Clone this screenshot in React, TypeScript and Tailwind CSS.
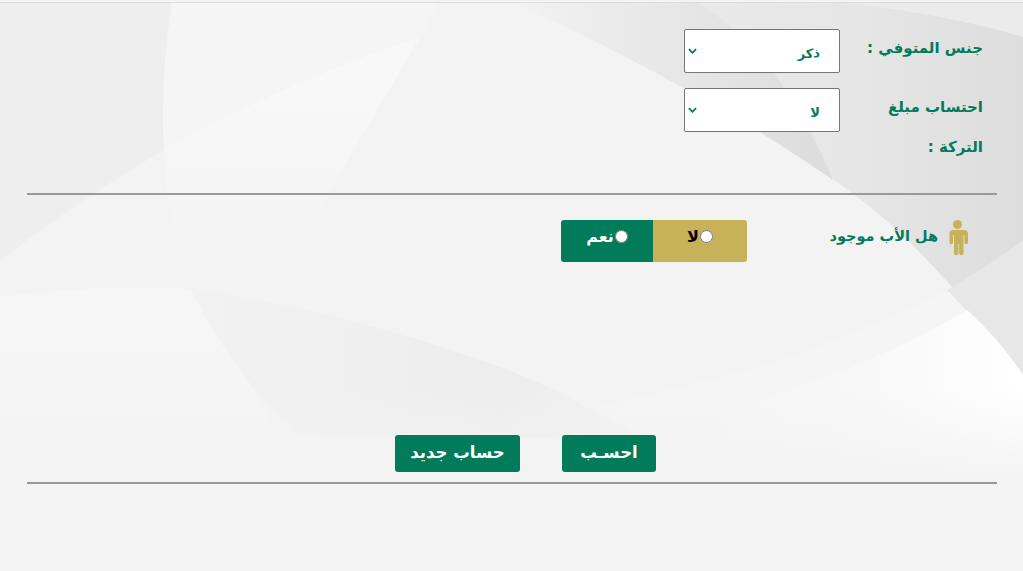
import React from 'react';

const font = { fontFamily: '"DejaVu Sans", sans-serif' };

const Background = () => (
  <svg className="absolute inset-0 h-full w-full" viewBox="0 0 1023 571" preserveAspectRatio="none" aria-hidden="true">
    <defs>
      <linearGradient id="rightMain" gradientUnits="userSpaceOnUse" x1="700" y1="0" x2="1023" y2="0">
        <stop offset="0" stopColor="#e9e9e9" />
        <stop offset="0.5" stopColor="#e6e6e6" />
        <stop offset="1" stopColor="#dddddd" />
      </linearGradient>
      <linearGradient id="rightBand" gradientUnits="userSpaceOnUse" x1="513" y1="0" x2="810" y2="0">
        <stop offset="0" stopColor="#f3f3f3" />
        <stop offset="0.35" stopColor="#eaeaea" />
        <stop offset="0.65" stopColor="#e5e5e5" />
        <stop offset="1" stopColor="#dddddd" />
      </linearGradient>
      <linearGradient id="wedge" gradientUnits="userSpaceOnUse" x1="0" y1="100" x2="0" y2="245">
        <stop offset="0" stopColor="#f8f8f8" />
        <stop offset="1" stopColor="#f3f3f3" />
      </linearGradient>
      <linearGradient id="midShape" gradientUnits="userSpaceOnUse" x1="190" y1="0" x2="640" y2="0">
        <stop offset="0" stopColor="#f2f2f2" />
        <stop offset="0.7" stopColor="#ededed" />
        <stop offset="1" stopColor="#f2f2f2" />
      </linearGradient>
      <linearGradient id="leftFade" gradientUnits="userSpaceOnUse" x1="0" y1="290" x2="0" y2="455">
        <stop offset="0" stopColor="#f6f6f6" />
        <stop offset="0.8" stopColor="#f5f5f5" />
        <stop offset="1" stopColor="#f3f3f3" />
      </linearGradient>
      <linearGradient id="whiteBand" gradientUnits="userSpaceOnUse" x1="640" y1="0" x2="1023" y2="0">
        <stop offset="0" stopColor="#f4f4f4" />
        <stop offset="0.6" stopColor="#f8f8f8" />
        <stop offset="1" stopColor="#ffffff" />
      </linearGradient>
      <linearGradient id="bottomFade" gradientUnits="userSpaceOnUse" x1="0" y1="390" x2="0" y2="485">
        <stop offset="0" stopColor="#f3f3f3" stopOpacity="0" />
        <stop offset="1" stopColor="#f3f3f3" />
      </linearGradient>
    </defs>
    <rect width="1023" height="571" fill="#f3f3f3" />
    {/* top left */}
    <path d="M0 2H172Q160 80 164 150Q70 205 0 261Z" fill="#eeeeee" />
    <path d="M172 2H440L420 37Q290 80 164 150Q160 80 172 2Z" fill="#f5f5f5" />
    <path d="M164 150Q290 80 420 37L316 215L300 245H177Q166 200 164 150Z" fill="url(#wedge)" />
    {/* bottom left */}
    <path d="M0 297Q110 282 200 290L280 440L250 455H0Z" fill="url(#leftFade)" />
    <path d="M190 288Q360 315 500 367Q570 392 640 440L295 434Q230 370 190 288Z" fill="url(#midShape)" />
    {/* top right */}
    <path d="M513 2Q620 50 740 120Q850 185 900 233Q960 290 1023 375V2Z" fill="url(#rightMain)" />
    <path d="M840 2Q950 15 1023 37V2Z" fill="#ebebeb" />
    <path d="M513 2H697L727 23Q760 55 777 77Q810 125 833 180Q790 150 740 120Q620 50 513 2Z" fill="url(#rightBand)" />
    <path d="M1023 240Q990 265 947 290Q985 330 1023 375Z" fill="#e7e7e7" />
    {/* bottom right */}
    <path d="M947 290Q880 325 780 360Q700 385 600 405L640 440L1023 420V375Q985 330 947 290Z" fill="#f5f5f5" />
    <path d="M967 310Q850 380 667 427L620 482H1023V375Q1000 340 967 310Z" fill="url(#whiteBand)" />
    <rect y="390" width="1023" height="95" fill="url(#bottomFade)" />
  </svg>
);

const Person = () => (
  <svg viewBox="0 0 21 35" className="h-[35px] w-[21px] fill-[#c7b159]">
    <circle cx="10.5" cy="4.5" r="4.5" />
    <path d="M4 10h13a4 4 0 0 1 4 4v8.5a1.7 1.7 0 0 1-3.6 0V15h-.9v18a2 2 0 0 1-4.4 0V24h-.7v9a2 2 0 0 1-4.4 0V15h-.9v7.5a1.7 1.7 0 0 1-3.6 0V14a4 4 0 0 1 4-4Z" />
  </svg>
);

const FieldSelect = ({ value }: { value: string }) => (
  <div className="relative h-[44px] w-[156px]">
    <select
      defaultValue={value}
      className="h-full w-full appearance-none rounded-[2px] border border-[#767676] bg-white pt-[6px] pr-[19px] text-[13px] font-bold text-[#027b5b]"
      style={font}
    >
      <option>{value}</option>
    </select>
    <svg viewBox="0 0 10 6" className="pointer-events-none absolute top-[19px] left-[4px] h-[6px] w-[9px] fill-none stroke-[#027b5b] stroke-2">
      <path d="M1 1l4 4 4-4" />
    </svg>
  </div>
);

const FormRow = ({ label, value }: { label: string; value: string }) => (
  <div className="flex items-start">
    <label className="-mt-[1px] w-[143px] text-[15px] leading-[40px] font-bold text-[#027b5b]" style={font}>
      {label}
    </label>
    <FieldSelect value={value} />
  </div>
);

const Toggle = ({ text, className }: { text: string; className: string }) => (
  <label className={`flex h-[42px] items-start justify-center gap-[1px] pt-[9px] text-[16px] leading-[16px] font-bold ${className}`} style={font}>
    <input type="radio" name="father" className="mt-[1px] h-[13px] w-[13px]" />
    {text}
  </label>
);

const ActionButton = ({ text, className }: { text: string; className: string }) => (
  <button className={`h-[37px] rounded-[3px] bg-[#027b5b] text-[16.5px] font-bold text-white ${className}`} style={font}>
    {text}
  </button>
);

export default function App() {
  return (
    <div dir="rtl" className="relative h-[571px] overflow-hidden bg-[#f3f3f3] pt-[2px]">
      <Background />
      <div className="relative border-t border-[#dddddd] pt-[26px] pr-[26px] pl-[27px]">
        <div className="flex flex-col gap-[15px] pr-[14px]">
          <FormRow label="جنس المتوفي :" value="ذكر" />
          <div className="h-[87px]">
            <FormRow label="احتساب مبلغ التركة :" value="لا" />
          </div>
        </div>

        <hr className="mt-[18px] border-t-2 border-[#999999]" />

        <div className="mt-[25px] flex items-start">
          <div className="flex w-[250px] items-start pr-[29px]">
            <Person />
            <span className="mr-[9px] pt-[6px] text-[14.5px] leading-[20px] font-bold whitespace-nowrap text-[#027b5b]" style={font}>
              هل الأب موجود
            </span>
          </div>
          <div className="flex w-[186px] overflow-hidden rounded-[3px]">
            <Toggle text="لا" className="w-[94px] bg-[#c7b159] text-black" />
            <Toggle text="نعم" className="w-[92px] bg-[#027b5b] text-white" />
          </div>
        </div>

        <div className="mt-[173px] flex gap-[42px] pr-[341px]">
          <ActionButton text="احسـب" className="w-[94px]" />
          <ActionButton text="حساب جديد" className="w-[125px]" />
        </div>

        <hr className="mt-[10px] border-t-2 border-[#999999]" />
      </div>
    </div>
  );
}
